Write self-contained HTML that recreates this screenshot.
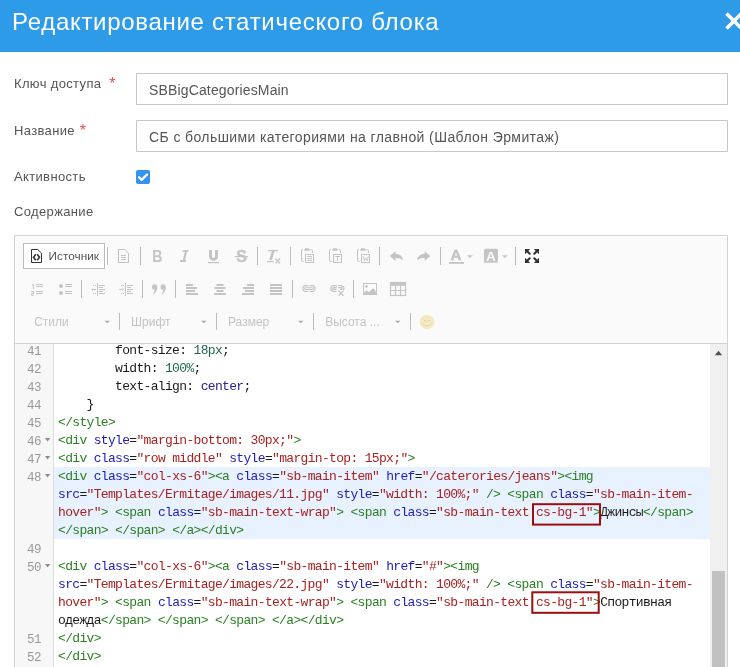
<!DOCTYPE html>
<html><head><meta charset="utf-8">
<style>
*{margin:0;padding:0;box-sizing:border-box}
html,body{width:740px;height:667px;overflow:hidden;background:#fff;font-family:"Liberation Sans",sans-serif}
.abs{position:absolute}
#hdr{left:0;top:0;width:740px;height:52px;background:#2e9be9}
#title{left:12px;top:7px;font-size:24px;letter-spacing:0.7px;color:#fff;white-space:nowrap;line-height:30px}
.lbl{position:absolute;left:14px;font-size:13px;letter-spacing:0.35px;color:#555;white-space:nowrap;line-height:16px}
.req{color:#e0504d;font-size:16px;position:relative;top:1px}
.inp{position:absolute;left:136px;width:592px;height:32px;border:1px solid #c8c8c8;background:#fff;font-size:14px;color:#555;padding-left:12px;line-height:32px;white-space:nowrap}
#cb{left:136px;top:170px;width:14px;height:14px;background:#3593f0;border-radius:2px}
#editor{left:14px;top:235px;width:714px;height:440px;border:1px solid #d1d1d1;background:#fff}
#tb{left:0;top:0;width:712px;height:108px;background:#fafafa;border-bottom:1px solid #d1d1d1;box-shadow:inset 1px 1px 0 #fff,inset -1px 0 0 #fff}
#code{left:0;top:108px;width:712px;height:340px;overflow:hidden}
#gut{left:0;top:0;width:39px;height:400px;background:#f7f7f7;border-right:1px solid #ddd}
.ln{position:absolute;left:0;width:26px;text-align:right;font-family:"Liberation Mono",monospace;font-size:12.5px;color:#999;line-height:18px;margin-top:1px;letter-spacing:-0.5px}
.cl{position:absolute;left:43px;font-family:"Liberation Mono",monospace;font-size:13px;letter-spacing:-0.67px;line-height:18px;white-space:pre;color:#1a1a1a}
.t{color:#2a7f22}.a{color:#1c1cb8}.s{color:#a82222}.n{color:#226650}.at{color:#2a2090}
#hl{left:39px;top:123px;width:657px;height:72px;background:#e8f2fe}
#sb{left:695px;top:0;width:17px;height:340px;background:#f0f0f0}
</style></head><body style="will-change:transform">
<div id="hdr" class="abs"><div id="title" class="abs">Редактирование статического блока</div><svg class="abs" style="left:700px;top:0" width="40" height="52"><path d="M26.5 13.5L41.5 28.5M41.5 13.5L26.5 28.5" stroke="#fff" stroke-width="3.6"/></svg></div>

<div class="lbl" style="top:75px">Ключ доступа <span class="req" style="margin-left:4px">*</span></div>
<div class="inp" style="top:73px;letter-spacing:0.15px">SBBigCategoriesMain</div>
<div class="lbl" style="top:122px">Название <span class="req" style="margin-left:1px">*</span></div>
<div class="inp" style="top:120px;letter-spacing:0.4px">СБ с большими категориями на главной (Шаблон Эрмитаж)</div>
<div class="lbl" style="top:169px">Активность</div>
<div id="cb" class="abs"><svg width="14" height="14" style="position:absolute;left:0;top:0"><path d="M3 7.3L5.6 9.9L11 4.5" stroke="#fff" stroke-width="2.3" stroke-linecap="round" stroke-linejoin="round" fill="none"/></svg></div>
<div class="lbl" style="top:204px">Содержание</div>

<div id="editor" class="abs">
  <div id="tb" class="abs"></div>
  <div id="code" class="abs">
    <div id="gut" class="abs"></div>
    <div id="hl" class="abs"></div>
    <div class="ln" style="top:-2px">41</div>
    <div class="cl" style="top:-2px">        font-size: <span class="n">18px</span>;</div>
    <div class="ln" style="top:16px">42</div>
    <div class="cl" style="top:16px">        width: <span class="n">100%</span>;</div>
    <div class="ln" style="top:34px">43</div>
    <div class="cl" style="top:34px">        text-align: <span class="at">center</span>;</div>
    <div class="ln" style="top:52px">44</div>
    <div class="cl" style="top:52px">    }</div>
    <div class="ln" style="top:70px">45</div>
    <div class="cl" style="top:70px"><span class="t">&lt;/style&gt;</span></div>
    <div class="ln" style="top:88px">46</div>
    <div class="cl" style="top:88px"><span class="t">&lt;div</span> <span class="a">style</span>=<span class="s">"margin-bottom: 30px;"</span><span class="t">&gt;</span></div>
    <div class="ln" style="top:106px">47</div>
    <div class="cl" style="top:106px"><span class="t">&lt;div</span> <span class="a">class</span>=<span class="s">"row middle"</span> <span class="a">style</span>=<span class="s">"margin-top: 15px;"</span><span class="t">&gt;</span></div>
    <div class="ln" style="top:124px">48</div>
    <div class="cl" style="top:124px"><span class="t">&lt;div</span> <span class="a">class</span>=<span class="s">"col-xs-6"</span><span class="t">&gt;&lt;a</span> <span class="a">class</span>=<span class="s">"sb-main-item"</span> <span class="a">href</span>=<span class="s">"/caterories/jeans"</span><span class="t">&gt;&lt;img</span></div>
    <div class="cl" style="top:142px"><span class="a">src</span>=<span class="s">"Templates/Ermitage/images/11.jpg"</span> <span class="a">style</span>=<span class="s">"width: 100%;"</span> <span class="t">/&gt;</span> <span class="t">&lt;span</span> <span class="a">class</span>=<span class="s">"sb-main-item-</span></div>
    <div class="cl" style="top:160px"><span class="s">hover"</span><span class="t">&gt;</span> <span class="t">&lt;span</span> <span class="a">class</span>=<span class="s">"sb-main-text-wrap"</span><span class="t">&gt;</span> <span class="t">&lt;span</span> <span class="a">class</span>=<span class="s">"sb-main-text cs-bg-1"</span><span class="t">&gt;</span>Джинсы<span class="t">&lt;/span&gt;</span></div>
    <div class="cl" style="top:178px"><span class="t">&lt;/span&gt;</span> <span class="t">&lt;/span&gt;</span> <span class="t">&lt;/a&gt;&lt;/div&gt;</span></div>
    <div class="ln" style="top:196px">49</div>
    <div class="ln" style="top:214px">50</div>
    <div class="cl" style="top:214px"><span class="t">&lt;div</span> <span class="a">class</span>=<span class="s">"col-xs-6"</span><span class="t">&gt;&lt;a</span> <span class="a">class</span>=<span class="s">"sb-main-item"</span> <span class="a">href</span>=<span class="s">"#"</span><span class="t">&gt;&lt;img</span></div>
    <div class="cl" style="top:232px"><span class="a">src</span>=<span class="s">"Templates/Ermitage/images/22.jpg"</span> <span class="a">style</span>=<span class="s">"width: 100%;"</span> <span class="t">/&gt;</span> <span class="t">&lt;span</span> <span class="a">class</span>=<span class="s">"sb-main-item-</span></div>
    <div class="cl" style="top:250px"><span class="s">hover"</span><span class="t">&gt;</span> <span class="t">&lt;span</span> <span class="a">class</span>=<span class="s">"sb-main-text-wrap"</span><span class="t">&gt;</span> <span class="t">&lt;span</span> <span class="a">class</span>=<span class="s">"sb-main-text cs-bg-1"</span><span class="t">&gt;</span>Спортивная</div>
    <div class="cl" style="top:268px">одежда<span class="t">&lt;/span&gt;</span> <span class="t">&lt;/span&gt;</span> <span class="t">&lt;/span&gt;</span> <span class="t">&lt;/a&gt;&lt;/div&gt;</span></div>
    <div class="ln" style="top:286px">51</div>
    <div class="cl" style="top:286px"><span class="t">&lt;/div&gt;</span></div>
    <div class="ln" style="top:304px">52</div>
    <div class="cl" style="top:304px"><span class="t">&lt;/div&gt;</span></div>
    <div id="sb" class="abs"></div>
  </div>
</div>
<svg class="abs" style="left:0;top:0" width="740" height="667">
<g fill="#8a8a8a">
<path d="M45 438H50.2L47.6 441.6Z"/><path d="M45 456H50.2L47.6 459.6Z"/><path d="M45 474H50.2L47.6 477.6Z"/><path d="M45 564H50.2L47.6 567.6Z"/>
</g>
<path d="M714.8 355.2H722.2L718.5 350.8Z" fill="#505050"/>
<rect x="712" y="571" width="13" height="100" fill="#c1c1c1"/>
<rect x="533" y="504.2" width="67" height="20.4" fill="none" stroke="#9a0f0f" stroke-width="2"/>
<rect x="532.3" y="592.3" width="66.4" height="20.5" fill="none" stroke="#9a0f0f" stroke-width="2"/>
</svg>
<svg id="tbsvg" width="740" height="345" viewBox="0 0 740 345" style="position:absolute;left:0;top:0">
<g fill="none" stroke="#bcbcbc" stroke-width="1">
  <path d="M107.5 247V265M140.5 247V265M257.5 247V265M290.5 247V265M379.5 247V265M440.5 247V265M515.5 247V265"/>
  <path d="M81.5 280V298M142.5 280V298M175.5 280V298M292.5 280V298M353.5 280V298"/>
  <path d="M119.5 313V330M216.5 313V330M313.5 313V330M410.5 313V330"/>
</g>
<!-- source button -->
<rect x="23.5" y="243.5" width="81" height="25" fill="#fff" stroke="#bcbcbc"/>
<path d="M31.5 249.5H37.8L41.5 253.2V262.5H31.5Z" fill="none" stroke="#333"/>
<path d="M35.8 254.3L33.5 257.3L35.8 260.3M37.2 254.3L39.5 257.3L37.2 260.3" fill="none" stroke="#333" stroke-width="1.6"/>
<text x="48.6" y="260" font-family="Liberation Sans" font-size="11.8" fill="#555">Источник</text>
<g fill="#c4c4c4" stroke="none">
<!-- new page -->
<path d="M118.5 249.5H124.8L128.5 253.2V262.5H118.5Z" fill="none" stroke="#c4c4c4"/>
<rect x="121" y="255" width="5" height="1"/><rect x="121" y="257" width="5" height="1"/><rect x="121" y="259" width="5" height="1"/>
<!-- B -->
<text x="152.3" y="261.6" font-family="Liberation Sans" font-weight="bold" font-size="15.5" transform="translate(153 261.6) scale(0.91 1.07) translate(-153 -261.6)">B</text>
<!-- I -->
<path d="M182.8 250H188.6L188.3 251.8H182.5Z M184.8 251.8H187L185.1 260H182.9Z M180.3 260H186.1L185.8 262H180Z"/>
<!-- U -->
<path d="M209 250V256.4A4.5 4.5 0 0 0 218 256.4V250H215V256.4A1.5 1.5 0 0 1 212 256.4V250Z"/>
<rect x="208" y="262" width="11" height="1.2"/>
<!-- S -->
<text x="236.2" y="261.7" font-family="Liberation Sans" font-weight="bold" font-size="16" stroke="#c4c4c4" stroke-width="0.35">S</text>
<rect x="235" y="256" width="13" height="1.2"/>
<!-- Tx -->
<path d="M268.2 249.9H278L277.8 251.3H268Z M271.8 251.3H274.5L272 259.9H269.3Z"/>
<rect x="267" y="261" width="7" height="1.2"/>
<path d="M275.5 258.5L280 263.5M280 258.5L275.5 263.5" stroke="#c4c4c4" stroke-width="1.2" fill="none"/>
</g>
<!-- paste icons -->
<g id="pst" fill="none" stroke="#c4c4c4" stroke-width="1">
  <path d="M302.9 249.5Q301.5 249.5 301.5 250.9V260.2Q301.5 261.5 302.8 261.5H303.6"/>
  <path d="M310.8 249.5H311.2Q312.5 249.5 312.5 250.8V253"/>
  <path d="M304.3 250.7H309.7L309.5 249.3L308.6 248.2H305.4L304.5 249.3Z" fill="#c4c4c4" stroke="none"/>
  <rect x="305.5" y="254.5" width="8" height="8"/>
</g>
<g fill="#c4c4c4">
  <rect x="307.2" y="256" width="4.8" height="1"/><rect x="307.2" y="258" width="4.8" height="1"/><rect x="307.2" y="260" width="4.8" height="1"/>
</g>
<use href="#pst" x="28"/>
<path d="M335.2 256.5H340M337.6 256.5V261" stroke="#c4c4c4" stroke-width="1" fill="none"/>
<use href="#pst" x="56"/>
<path d="M363.3 256.3L364.3 260.8L365.8 257.8L367.3 260.8L368.3 256.3" stroke="#c4c4c4" stroke-width="0.9" fill="none"/>
<!-- undo/redo -->
<path id="undo" d="M389.8 256L395.6 251.2V254.1C399.5 254.1 402.6 256.2 403 260.3C401 258.6 398.8 258 395.6 258V260.9Z" fill="#c4c4c4"/>
<use href="#undo" transform="translate(820.2 0) scale(-1 1)"/>
<!-- text color -->
<text x="450.4" y="259.8" font-family="Liberation Sans" font-weight="bold" font-size="14" fill="#c4c4c4" stroke="#c4c4c4" stroke-width="0.4" transform="translate(450.4 259.8) scale(1.08 1) translate(-450.4 -259.8)">A</text>
<rect x="449" y="262" width="15" height="1.8" fill="#c4c4c4"/>
<path d="M467 255.2H472.8L469.9 257.9Z" fill="#c4c4c4"/>
<rect x="484" y="248.8" width="14" height="14" rx="1.5" fill="#c4c4c4"/>
<text x="486.1" y="260.8" font-family="Liberation Sans" font-weight="bold" font-size="13.5" fill="#fafafa">A</text>
<path d="M502 255.2H507.8L504.9 257.9Z" fill="#c4c4c4"/>
<!-- maximize -->
<g id="mxq" fill="#333"><path d="M525 249H530.2L525 254.2Z"/><path d="M526.3 250.3L529.7 253.7" stroke="#333" stroke-width="2.1" stroke-linecap="round"/></g>
<use href="#mxq" transform="translate(1064 0) scale(-1 1)"/>
<use href="#mxq" transform="translate(0 512) scale(1 -1)"/>
<use href="#mxq" transform="translate(1064 512) scale(-1 -1)"/>

<!-- row 2 -->
<g fill="#c4c4c4">
  <!-- numbered -->
  <path d="M32 284.3H33.9V289H32.9V285.3H32Z"/>
  <path d="M31.2 291H34V293.9H32.2V294.8H34V295.8H31.2V293H33V292H31.2Z"/>
  <rect x="36" y="284" width="7" height="1"/><rect x="36" y="286" width="7" height="1"/>
  <rect x="36" y="291" width="7" height="1"/><rect x="36" y="293" width="7" height="1"/>
  <!-- bullet -->
  <circle cx="61" cy="286" r="2"/><circle cx="61" cy="293" r="2"/>
  <rect x="65" y="284" width="7" height="1"/><rect x="65" y="286" width="7" height="1"/>
  <rect x="65" y="291" width="7" height="1"/><rect x="65" y="293" width="7" height="1"/>
</g>
<g id="ind" fill="#c4c4c4">
  <rect x="97" y="283" width="1" height="13"/>
  <rect x="93" y="285" width="1" height="1"/><rect x="95" y="285" width="1" height="1"/>
  <rect x="93" y="293" width="1" height="1"/><rect x="95" y="293" width="1" height="1"/>
  <rect x="99" y="285" width="6" height="1"/><rect x="99" y="287" width="4" height="1"/><rect x="99" y="289" width="6" height="1"/><rect x="99" y="291" width="4" height="1"/><rect x="99" y="293" width="6" height="1"/>
</g>
<path d="M91.3 289.5L93 288V291Z M92.5 289H96V290H92.5Z" fill="#c4c4c4"/>
<use href="#ind" x="28"/>
<path d="M124 289.5L122.3 288V291Z M119.3 289H122.8V290H119.3Z" fill="#c4c4c4"/>
<!-- quote -->
<g id="cm" fill="#c4c4c4"><circle cx="154.6" cy="286.9" r="2.6"/><path d="M157.2 287C157.4 290.5 155.5 293.3 152.4 294.9C153.9 293 154.8 291.2 154.6 289.5Z"/></g>
<use href="#cm" x="8.5"/>
<!-- align -->
<g fill="#c4c4c4">
  <rect x="186" y="284" width="7" height="2"/><rect x="186" y="287" width="11" height="2"/><rect x="186" y="290" width="9" height="2"/><rect x="186" y="293" width="12" height="2"/>
  <rect x="216.5" y="284" width="7" height="2"/><rect x="214.5" y="287" width="11" height="2"/><rect x="216.5" y="290" width="7" height="2"/><rect x="214" y="293" width="12" height="2"/>
  <rect x="247" y="284" width="7" height="2"/><rect x="243" y="287" width="11" height="2"/><rect x="245" y="290" width="9" height="2"/><rect x="242" y="293" width="12" height="2"/>
  <rect x="270" y="284" width="12" height="2"/><rect x="270" y="287" width="12" height="2"/><rect x="270" y="290" width="12" height="2"/><rect x="270" y="293" width="12" height="2"/>
</g>
<!-- link -->
<g fill="none" stroke="#c4c4c4" stroke-width="1.05">
  <rect x="302.8" y="285.6" width="12.4" height="5.8" rx="2.9"/>
  <rect x="304.6" y="287.7" width="8.8" height="1.8" rx="0.9"/>
</g>
<rect x="308.4" y="284.6" width="1.2" height="2" fill="#fafafa"/><rect x="308.4" y="290.6" width="1.2" height="2" fill="#fafafa"/>
<g fill="none" stroke="#c4c4c4" stroke-width="1.2">
  <path d="M337 285.6H333.7A2.9 2.9 0 0 0 333.7 291.4H336.5M337 287.6H333.6A0.9 0.9 0 0 0 333.6 289.4H336.5"/>
  <path d="M338.3 285.6H341.1A2.9 2.9 0 0 1 343.4 290.2M338.3 287.6H341.4A0.9 0.9 0 0 1 341.4 289.4H340"/>
  <path d="M338.5 290.8L343.5 295.7M343.5 290.8L338.5 295.7"/>
</g>
<!-- image -->
<rect x="363.5" y="283.5" width="13" height="11" fill="none" stroke="#c4c4c4"/>
<circle cx="366.4" cy="286.4" r="1.3" fill="#c4c4c4"/>
<path d="M364 294.5V292.5L366.8 290.2L368.8 292.2L373.2 288.1L376 291.9V294.5Z" fill="#c4c4c4"/>
<!-- table -->
<rect x="390.5" y="282.5" width="15" height="13" fill="none" stroke="#c4c4c4" stroke-width="1.2"/>
<rect x="390" y="282" width="16" height="3.8" fill="#c4c4c4"/>
<path d="M395.5 285V295M400.5 285V295M390 290.5H406" stroke="#c4c4c4" stroke-width="1.2"/>

<!-- row 3 -->
<g font-family="Liberation Sans" font-size="12" fill="#c4c4c4">
  <text x="34.2" y="325.6">Стили</text>
  <text x="131" y="325.6">Шрифт</text>
  <text x="228" y="325.6">Размер</text>
  <text x="325.2" y="325.6">Высота ...</text>
</g>
<g fill="#a8a8a8">
  <path d="M104.5 320.8H110L107.25 323.3Z"/><path d="M201 320.8H206.5L203.75 323.3Z"/><path d="M298 320.8H303.5L300.75 323.3Z"/><path d="M395 320.8H400.5L397.75 323.3Z"/>
</g>
<circle cx="427" cy="322" r="7.1" fill="#f2e2b2"/>
<circle cx="427" cy="322" r="6.4" fill="#f5e8c3"/>
<circle cx="425" cy="320.6" r="0.9" fill="#e2cf9d"/><circle cx="429" cy="320.6" r="0.9" fill="#e2cf9d"/>
<path d="M422.5 323.5Q427 327.5 431.5 323.5" stroke="#e2cf9d" stroke-width="1" fill="#faf3e0"/>
</svg>

</body></html>
